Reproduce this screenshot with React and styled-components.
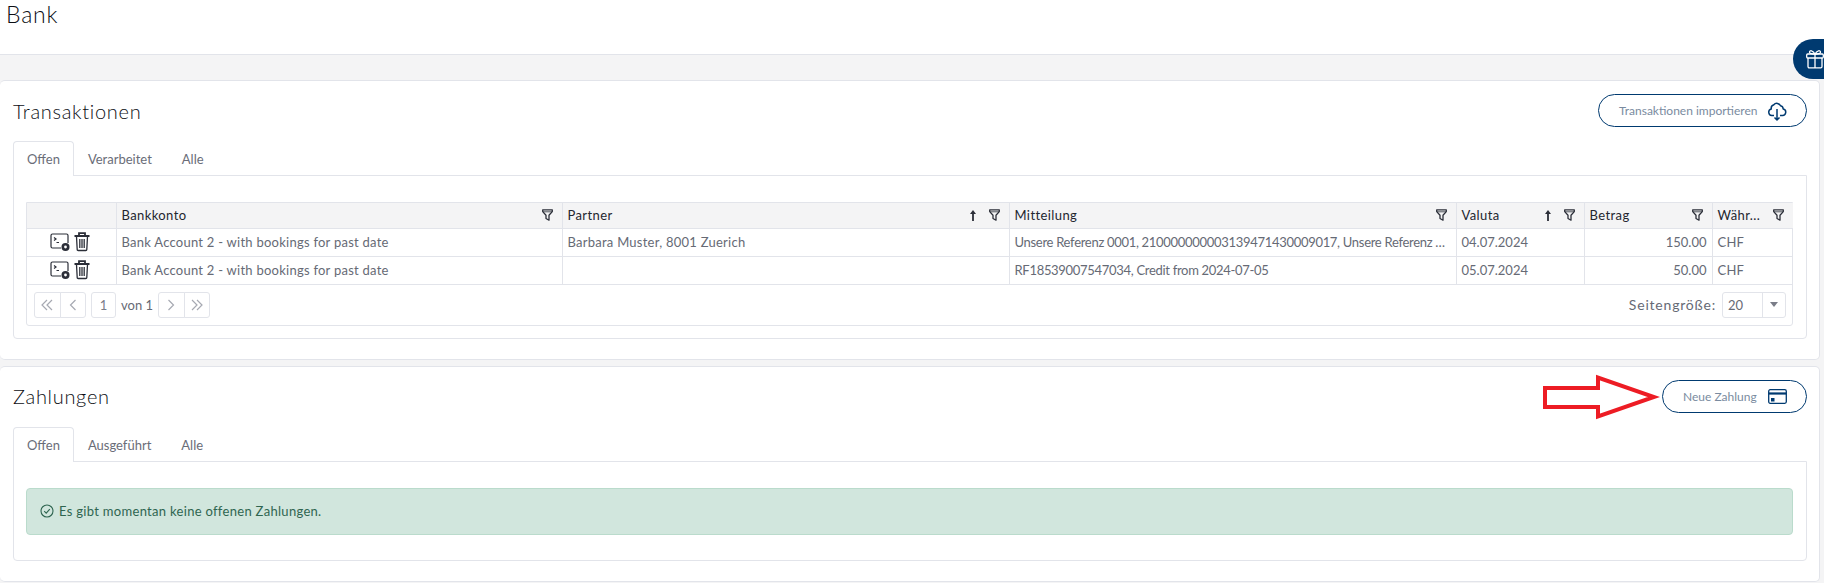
import styled, { createGlobalStyle } from 'styled-components';

const Global = createGlobalStyle`
  html, body { margin: 0; padding: 0; background: #f4f4f5; overflow: hidden; }
  body { font-family: "Lato", "Open Sans", sans-serif; font-size: 13px; color: #666a75; }
  * { box-sizing: border-box; }
`;

const Page = styled.div`
  position: relative;
  width: 1824px;
  height: 583px;
  overflow: hidden;
`;

const TopBar = styled.header`
  height: 55px;
  background: #fff;
  border-bottom: 1px solid #e2e4ea;
  padding: 0 6px;
`;

const PageTitle = styled.h1`
  margin: 0;
  font-size: 23px;
  line-height: 28px;
  font-weight: 300;
  letter-spacing: 0.8px;
  color: #0c0e14;
`;

const Content = styled.main`
  display: flex;
  flex-direction: column;
  gap: 6px;
  padding: 25px 4px 0 0;
`;

const Card = styled.section`
  background: #fff;
  border: 1px solid #e2e4ea;
  border-left: 0;
  border-radius: 5px;
  padding: 13px 12px 20px 13px;
`;

const CardHead = styled.div`
  display: flex;
  justify-content: space-between;
  align-items: center;
  height: 33px;
  margin-bottom: 14px;
`;

const CardTitle = styled.h2`
  margin: 0;
  font-size: 20px;
  font-weight: 300;
  letter-spacing: 0.7px;
  color: #0c0e14;
`;

const OutlineButton = styled.button`
  display: flex;
  align-items: center;
  justify-content: space-between;
  width: ${p => p.$width}px;
  height: 33px;
  padding: 0 19px 0 20px;
  background: #fff;
  border: 1px solid #003a70;
  border-radius: 17px;
  font: inherit;
  font-size: 12px;
  color: #7a8ba0;
`;

const TabRow = styled.div`
  display: flex;
  height: 34px;
`;

const Tab = styled.div`
  display: flex;
  align-items: center;
  height: 35px;
  padding: 0 13px;
  margin-right: ${p => (p.$active ? 0 : 2)}px;
  font-size: 13px;
  background: ${p => (p.$active ? '#fff' : 'transparent')};
  border: 1px solid ${p => (p.$active ? '#e2e4ea' : 'transparent')};
  border-bottom: 0;
  border-radius: 4px 4px 0 0;
  position: relative;
  z-index: 1;
  color: #6a6d78;
`;

const TabPanel = styled.div`
  border: 1px solid #e2e4ea;
  border-radius: 0 0 4px 4px;
  padding: ${p => p.$pad};
`;

const Grid = styled.div`
  border: 1px solid #e2e4ea;
  border-radius: 0 0 3px 3px;
`;

const Table = styled.table`
  width: 100%;
  table-layout: fixed;
  border-collapse: collapse;
`;

const Head = styled.th`
  height: 25px;
  padding: 0 9px 0 5px;
  background: #f4f4f5;
  border-right: 1px solid #e2e4ea;
  border-bottom: 1px solid #e2e4ea;
  text-align: left;
  font-weight: 400;
  font-size: 13px;
  color: #23262f;
  &:last-child { border-right: 0; }
`;

const HeadInner = styled.div`
  display: flex;
  align-items: center;
  gap: 13px;
`;

const HeadLabel = styled.span`
  flex: 1;
  min-width: 0;
  letter-spacing: 0.4px;
`;

const Cell = styled.td`
  height: ${p => p.$h || 28}px;
  padding: 0 5px;
  border-right: 1px solid #e2e4ea;
  border-bottom: 1px solid #e2e4ea;
  text-align: ${p => p.$align || 'left'};
  white-space: nowrap;
  overflow: hidden;
  text-overflow: ellipsis;
  font-size: 13px;
  letter-spacing: ${p => p.$track}px;
  &:last-child { border-right: 0; }
`;

const Actions = styled.div`
  display: flex;
  justify-content: center;
  gap: 4px;
  align-items: center;
  padding-right: 2px;
`;

const Pager = styled.div`
  display: flex;
  justify-content: space-between;
  align-items: center;
  height: 40px;
  padding: 0 6px 0 7px;
`;

const PagerGroup = styled.div`
  display: flex;
  align-items: center;
  gap: ${p => p.$gap || 0}px;
`;

const PageButton = styled.div`
  display: flex;
  align-items: center;
  justify-content: center;
  width: ${p => p.$w || 26.5}px;
  height: 26px;
  border: 1px solid #e2e4ea;
  margin-left: ${p => (p.$joined ? -1 : 0)}px;
  border-radius: ${p => p.$radius || '3px'};
  color: #a6a9b2;
`;

const PageNumber = styled(PageButton)`
  color: #7a7d88;
  font-size: 13px;
`;

const SizeLabel = styled.span`
  font-size: 14px;
  letter-spacing: 0.8px;
`;

const Select = styled.div`
  display: flex;
  width: 64px;
  height: 26px;
  border: 1px solid #e2e4ea;
  border-radius: 3px;
`;

const SelectValue = styled.div`
  width: 40px;
  padding-left: 5px;
  line-height: 24px;
  border-right: 1px solid #e2e4ea;
`;

const SelectCaret = styled.div`
  flex: 1;
  display: flex;
  align-items: center;
  justify-content: center;
  &::after {
    content: "";
    border-left: 4px solid transparent;
    border-right: 4px solid transparent;
    border-top: 5px solid #7a7d88;
  }
`;

const Alert = styled.div`
  display: flex;
  align-items: center;
  gap: 5px;
  height: 47px;
  padding: 0 13px;
  background: #d1e6dd;
  border: 1px solid #badbcc;
  border-radius: 4px;
  color: #2f6550;
  font-size: 13px;
  letter-spacing: 0.3px;
`;

const GiftTab = styled.div`
  position: absolute;
  top: 39px;
  right: 0;
  width: 31px;
  height: 40px;
  background: #003a70;
  border-radius: 20px 0 0 20px;
  display: flex;
  align-items: center;
  padding-left: 13px;
`;

const Callout = styled.svg`
  position: absolute;
  left: 1540px;
  top: 374px;
`;

const Filter = () => (
  <svg width="11" height="12" viewBox="0 0 11 12" fill="none" stroke="#2b2e38" strokeWidth="1.3" strokeLinejoin="round">
    <path d="M.7 .8h9.600v1.800L7 6.200v5L4 9.500V6.200L.7 2.600z" />
    <path d="M1 2.800h9" strokeWidth="0.8" />
  </svg>
);

const SortUp = () => (
  <svg width="6" height="11" viewBox="0 0 6 11" fill="#2b2e38">
    <path d="M3 0L6 4H3.900v7H2.100V4H0z" />
  </svg>
);

const TerminalPlus = () => (
  <svg width="20" height="18" viewBox="0 0 20 18" fill="none" stroke="#2b2e38" strokeWidth="1.2">
    <path d="M11 15H2.500A1.500 1.500 0 0 1 1 13.500V2.500A1.500 1.500 0 0 1 2.500 1H16.500A1.500 1.500 0 0 1 18 2.500V10" />
    <path d="M4 4.500l2 1.500L4 7.500M6.500 9.500H9" />
    <circle cx="15.500" cy="14" r="4" fill="#2b2e38" stroke="none" />
    <circle cx="15.500" cy="14" r="1.400" fill="#fff" stroke="none" />
  </svg>
);

const Trash = () => (
  <svg width="16" height="20" viewBox="0 0 16 20" fill="none" stroke="#2b2e38" strokeWidth="1.3">
    <path d="M.5 4h15M5 3.500V1.200h6v2.300" strokeWidth="1.800" />
    <path d="M2.500 4.500l.7 13a1 1 0 0 0 1 1h7.600a1 1 0 0 0 1-1l.7-13" />
    <path d="M5.800 7v9M8 7v9M10.200 7v9" />
  </svg>
);

const Chevrons = ({ dir, double }) => (
  <svg width="14" height="12" viewBox="0 0 14 12" fill="none" stroke="#a6a9b2" strokeWidth="1.2">
    <g transform={dir === 'right' ? 'matrix(-1 0 0 1 14 0)' : undefined}>
      <path d={double ? 'M7 1L2 6l5 5M12 1L7 6l5 5' : 'M9.500 1L4.500 6l5 5'} />
    </g>
  </svg>
);

const columns = [
  { width: 89 },
  { width: 446, label: 'Bankkonto' },
  { width: 447, label: 'Partner', sort: true },
  { width: 447, label: 'Mitteilung' },
  { width: 128, label: 'Valuta', sort: true },
  { width: 128, label: 'Betrag' },
  { width: 81, label: 'Währ...' },
];

// letter spacing per data column, the digits of the font run wider than the rest
const tracking = [0.25, 0.25, -0.3, 0, 0, 0.25];

const rows = [
  ['Bank Account 2 - with bookings for past date', 'Barbara Muster, 8001 Zuerich', 'Unsere Referenz 0001, 210000000003139471430009017, Unsere Referenz 0001, 210000', '04.07.2024', '150.00', 'CHF'],
  ['Bank Account 2 - with bookings for past date', '', 'RF18539007547034, Credit from 2024-07-05', '05.07.2024', '50.00', 'CHF'],
];

const App = () => (
  <Page>
    <Global />
    <TopBar>
      <PageTitle>Bank</PageTitle>
    </TopBar>
    <Content>
      <Card>
        <CardHead>
          <CardTitle>Transaktionen</CardTitle>
          <OutlineButton $width={209}>
            Transaktionen importieren
            <svg width="20" height="20" viewBox="0 0 20 20" fill="none" stroke="#003a70" strokeWidth="1.5" strokeLinejoin="round">
              <path d="M7 14.500H4.800a3.300 3.300 0 0 1-.5-6.500 3.800 3.800 0 0 1 2.500-4.300A4 4 0 0 1 13.500 4.800a3.500 3.500 0 0 1 2.700 3.200 3.300 3.300 0 0 1-1 6.500H13" />
              <path d="M10 8v11M7.500 16.500L10 19l2.500-2.500" />
            </svg>
          </OutlineButton>
        </CardHead>
        <TabRow>
          <Tab $active>Offen</Tab>
          <Tab>Verarbeitet</Tab>
          <Tab>Alle</Tab>
        </TabRow>
        <TabPanel $pad="26px 13px 12px 12px">
          <Grid>
            <Table>
              <colgroup>
                {columns.map((c, i) => <col key={i} width={c.width} />)}
              </colgroup>
              <thead>
                <tr>
                  {columns.map((c, i) => (
                    <Head key={i}>
                      {c.label && (
                        <HeadInner>
                          <HeadLabel>{c.label}</HeadLabel>
                          {c.sort && <SortUp />}
                          <Filter />
                        </HeadInner>
                      )}
                    </Head>
                  ))}
                </tr>
              </thead>
              <tbody>
                {rows.map((r, i) => (
                  <tr key={i}>
                    <Cell $h={28} $track={0}>
                      <Actions>
                        <TerminalPlus />
                        <Trash />
                      </Actions>
                    </Cell>
                    {r.map((v, j) => (
                      <Cell key={j} $align={j === 4 ? 'right' : 'left'} $track={tracking[j]}>{v}</Cell>
                    ))}
                  </tr>
                ))}
              </tbody>
            </Table>
            <Pager>
              <PagerGroup $gap={5}>
                <PagerGroup>
                  <PageButton $radius="3px 0 0 3px"><Chevrons double /></PageButton>
                  <PageButton $joined $radius="0 3px 3px 0"><Chevrons /></PageButton>
                </PagerGroup>
                <PageNumber $w={25}>1</PageNumber>
                <span>von 1</span>
                <PagerGroup>
                  <PageButton $radius="3px 0 0 3px"><Chevrons dir="right" /></PageButton>
                  <PageButton $joined $radius="0 3px 3px 0"><Chevrons dir="right" double /></PageButton>
                </PagerGroup>
              </PagerGroup>
              <PagerGroup $gap={6}>
                <SizeLabel>Seitengröße:</SizeLabel>
                <Select>
                  <SelectValue>20</SelectValue>
                  <SelectCaret />
                </Select>
              </PagerGroup>
            </Pager>
          </Grid>
        </TabPanel>
      </Card>
      <Card>
        <CardHead>
          <CardTitle>Zahlungen</CardTitle>
          <OutlineButton $width={145}>
            Neue Zahlung
            <svg width="19" height="15" viewBox="0 0 19 15" fill="none" stroke="#003a70" strokeWidth="1.3">
              <rect x="0.700" y="0.700" width="17.600" height="13.600" rx="1.500" />
              <path d="M0.700 4.500h17.600" strokeWidth="2.200" />
              <rect x="3" y="9" width="3.500" height="3.500" fill="#003a70" stroke="none" />
            </svg>
          </OutlineButton>
        </CardHead>
        <TabRow>
          <Tab $active>Offen</Tab>
          <Tab>Ausgeführt</Tab>
          <Tab>Alle</Tab>
        </TabRow>
        <TabPanel $pad="26px 13px 25px 12px">
          <Alert>
            <svg width="14" height="14" viewBox="0 0 14 14" fill="none" stroke="#2f6550" strokeWidth="1.100">
              <circle cx="7" cy="7" r="6" />
              <path d="M4.200 7.200l2 2 3.600-4" />
            </svg>
            Es gibt momentan keine offenen Zahlungen.
          </Alert>
        </TabPanel>
      </Card>
    </Content>
    <GiftTab>
      <svg width="18" height="20" viewBox="0 0 18 20" fill="none" stroke="#fff" strokeWidth="1.300" strokeLinejoin="round">
        <rect x="0.700" y="5" width="16.600" height="4" rx="1" />
        <path d="M2 9v8.500a1.300 1.300 0 0 0 1.300 1.300h11.400a1.300 1.300 0 0 0 1.300-1.300V9M9 5v14" />
        <path d="M9 5C7 1 3.500 1 3.500 3.200 3.500 5 6 5 9 5zM9 5c2-4 5.500-4 5.500-1.800C14.500 5 12 5 9 5z" />
      </svg>
    </GiftTab>
    <Callout width="120" height="48" viewBox="0 0 120 48" fill="none">
      <path d="M5 14H58V3.500L114 23 58 42.500V33H5z" stroke="#ed1c24" strokeWidth="4" />
    </Callout>
  </Page>
);

export default App;
